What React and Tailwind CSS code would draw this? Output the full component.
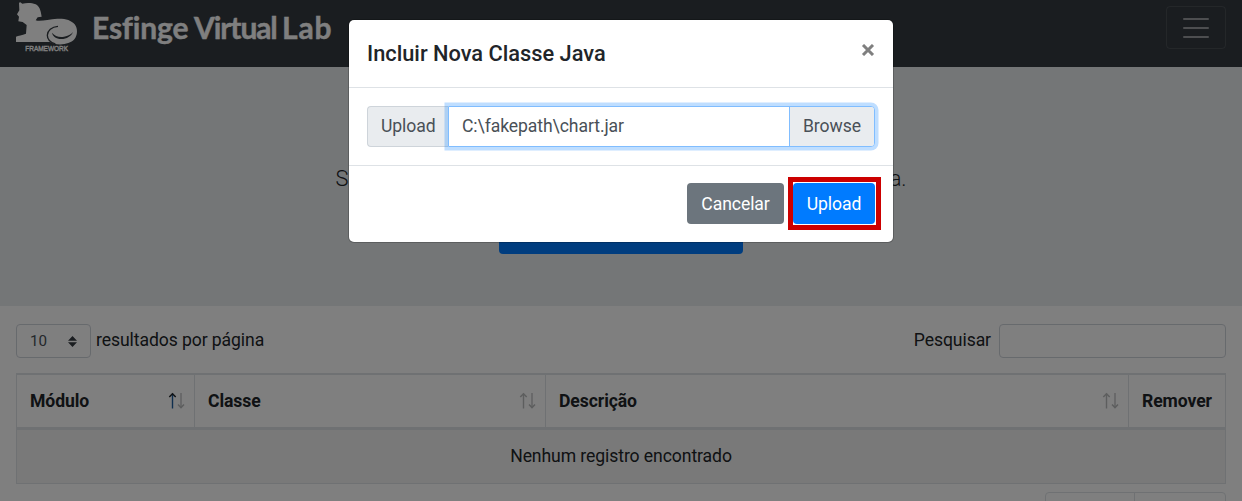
function SphinxLogo() {
  return (
    <svg className="mt-[1px] h-[56px] w-[62px] shrink-0 overflow-visible" viewBox="48 3 186 168" fill="#fff">
      <path d="M57 8 L61 7 L67 11 C80 8 95 8 107 13 C118 18 122 30 125 50 L113 52 L107 61 C122 66 145 57 172 56 C195 55 214 60 224 73 C234 86 233 106 223 118 C211 131 185 137 162 131 L150 126 L48 126 L48 110 C55 107 66 106 78 101 L80 75 L68 66 L55 64 L57 50 L51 43 L58 31 Z" />
      <path d="M174 79 C155 80 142 92 142 106 C142 119 153 128 166 132" fill="none" stroke="#343a40" strokeWidth="4" />
      <path d="M156 98 C164 108 178 113 192 110 C204 108 213 104 219 96 C214 109 200 117 184 117 C168 117 158 109 156 98" fill="#343a40" />
      <text x="76" y="154" fontFamily="Liberation Sans" fontSize="24" fontWeight="400" stroke="#fff" strokeWidth="1.2" textLength="128" lengthAdjust="spacingAndGlyphs">FRAMEWORK</text>
    </svg>
  );
}

function SortArrows({ active }) {
  return (
    <svg className="h-[18px] w-[18px]" viewBox="0 0 18 18" fill="none" stroke="#212529">
      <g opacity={active ? 1 : 0.3}>
        <path d="M5.5 1.5V16.5" stroke={active ? "#1f5f9f" : "#212529"} strokeWidth="1.4" />
        <path d="M2.3 5 L5.5 1.8 L8.7 5" strokeWidth="1.5" />
      </g>
      <g opacity="0.3">
        <path d="M14 1V16" strokeWidth="1.3" />
        <path d="M11 12.5 L14 15.6 L17 12.5" strokeWidth="1.5" />
      </g>
    </svg>
  );
}

function HeaderCell({ children, className, sort, active }) {
  return (
    <div className={`flex items-center justify-between border-r border-[#dee2e6] pl-[13px] pr-[9px] font-bold ${className}`}>
      <span>{children}</span>
      {sort && <SortArrows active={active} />}
    </div>
  );
}

function Page() {
  return (
    <div>
      <header className="flex h-[67px] items-start justify-between bg-[#343a40] pl-4 pr-4">
        <div className="flex">
          <SphinxLogo />
          <span className="ml-[14px] mt-[6px] flex whitespace-nowrap font-[Lato] text-[30px] font-bold leading-[42px] text-white [-webkit-text-stroke:0.4px_white] [font-variant-ligatures:none]">
            <span className="w-[102px]">Esfinge</span>
            <span className="w-[88px] tracking-[-1.1px]">Virtual</span>
            <span className="tracking-[0.8px]">Lab</span>
          </span>
        </div>
        <div className="mt-[6px] flex h-[43px] w-[60px] flex-col items-center justify-center gap-[7px] rounded-[4px] border border-white/10">
          <span className="h-[2px] w-[26px] rounded-full bg-white/50" />
          <span className="h-[2px] w-[26px] rounded-full bg-white/50" />
          <span className="h-[2px] w-[26px] rounded-full bg-white/50" />
        </div>
      </header>
      <section className="flex h-[239px] flex-col items-center bg-[#e9ecef] pt-[95px]">
        <div className="flex w-[571px] justify-between text-[21.8px] font-light leading-[33px]">
          <span>S</span>
          <span>a.</span>
        </div>
        <div className="mt-[18px] h-[41px] w-[244px] rounded-[4px] bg-[#007bff]" />
      </section>
      <main className="px-4 pt-[18px]">
        <div className="flex h-[34px] justify-between">
          <div className="flex">
            <div className="flex w-[75px] items-center justify-between rounded-[4px] border border-[#ced4da] pl-[13px] pr-[13px] text-[15.2px] text-[#495057]">
              10
              <svg className="h-[11px] w-[9px]" viewBox="0 0 9 11" fill="#343a40">
                <path d="M4.5 0 L9 4.8 H0 Z M4.5 11 L0 6.2 H9 Z" />
              </svg>
            </div>
            <span className="ml-[5px] leading-[32px]">resultados por página</span>
          </div>
          <div className="flex">
            <span className="mr-[8px] leading-[32px]">Pesquisar</span>
            <div className="w-[227px] rounded-[4px] border border-[#ced4da]" />
          </div>
        </div>
        <div className="mt-[15px] border-l border-t-2 border-[#dee2e6]">
          <div className="flex h-[52px]">
            <HeaderCell className="w-[178px]" sort active>Módulo</HeaderCell>
            <HeaderCell className="w-[351px]" sort>Classe</HeaderCell>
            <HeaderCell className="w-[583px]" sort>Descrição</HeaderCell>
            <HeaderCell className="flex-1">Remover</HeaderCell>
          </div>
          <div className="flex h-[57px] items-center justify-center border-b border-r border-t-[3px] border-[#dee2e6] bg-[#f2f2f2] pb-[2px]">
            Nenhum registro encontrado
          </div>
        </div>
        <div className="mt-[8px] flex justify-end">
          <div className="flex h-[41px] w-[181px] rounded-[4px] border border-[#dee2e6]">
            <div className="w-[89px] border-r border-[#dee2e6]" />
          </div>
        </div>
      </main>
    </div>
  );
}

function UploadDialog() {
  return (
    <div className="flex h-[222px] w-[544px] flex-col rounded-[5px] bg-white shadow-[0_0_0_1px_rgba(0,0,0,0.2)]">
      <div className="flex h-[68px] items-start justify-between border-b border-[#dee2e6] px-[18px] pt-[17px]">
        <h5 className="text-[21.8px] font-medium leading-[33px] tracking-normal">Incluir Nova Classe Java</h5>
        <svg className="mt-[7px] h-[12px] w-[14px]" viewBox="0 0 14 12" stroke="#7f7f7f" strokeWidth="3">
          <path d="M2 1 L12 11 M12 1 L2 11" />
        </svg>
      </div>
      <div className="px-[18px] pt-[18px]">
        <div className="flex h-[41px] w-[508px] text-[#495057]">
          <div className="flex w-[81px] items-center rounded-l-[4px] border border-r-0 border-[#ced4da] bg-[#e9ecef] pb-[2px] pl-[13px]">Upload</div>
          <div className="flex flex-1 rounded-r-[4px] border border-[#80bdff] bg-white shadow-[0_0_0_3.5px_rgba(0,123,255,0.25)]">
            <span className="flex flex-1 items-center pb-[2px] pl-[13px]">C:\fakepath\chart.jar</span>
            <span className="flex w-[85px] items-center rounded-r-[3px] border-l border-[#80bdff] bg-[#e9ecef] pb-[2px] pl-[13px]">Browse</span>
          </div>
        </div>
      </div>
      <div className="mt-[18px] flex flex-1 justify-end border-t border-[#dee2e6] pr-[12px] pt-[11px] text-white">
        <button className="mr-[4px] mt-[6px] flex h-[41px] w-[97px] items-center justify-center rounded-[4px] bg-[#6c757d]">Cancelar</button>
        <div className="flex h-[53px] w-[93px] items-center border-[5px] border-[#cc0000]">
          <button className="flex h-[41px] w-[82px] items-center justify-center rounded-[4px] bg-[#007bff]">Upload</button>
        </div>
      </div>
    </div>
  );
}

export default function App() {
  return (
    <div className="relative h-[501px] w-[1242px] overflow-hidden bg-white font-[Roboto,sans-serif] text-[17.6px] leading-[26px] tracking-[-0.09px] text-[#212529]">
      <Page />
      <div className="absolute inset-0 flex items-start justify-center bg-black/50 pt-[20px]">
        <UploadDialog />
      </div>
    </div>
  );
}
